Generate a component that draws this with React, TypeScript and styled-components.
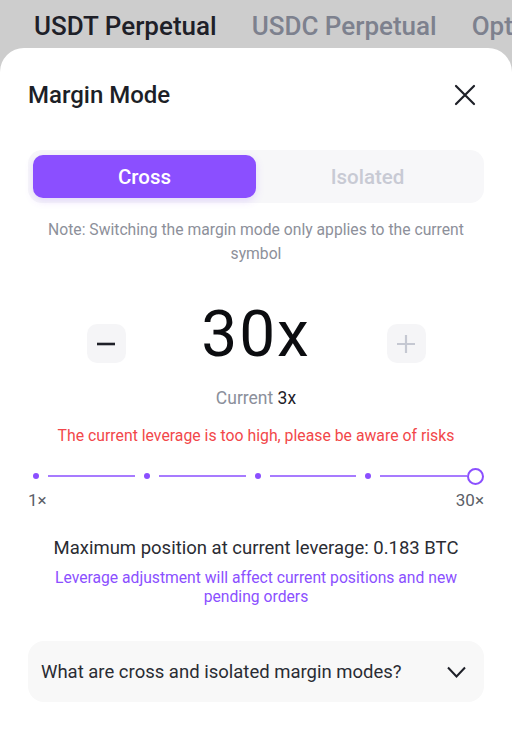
import { Fragment } from 'react'
import styled, { createGlobalStyle } from 'styled-components'

const GlobalStyle = createGlobalStyle`
  html, body {
    margin: 0;
    padding: 0;
    background: #cdcdcd;
    font-family: Roboto, 'Liberation Sans', Arial, sans-serif;
    -webkit-font-smoothing: antialiased;
  }
  * {
    box-sizing: border-box;
  }
`

const Page = styled.div`
  width: 512px;
  height: 729px;
  overflow: hidden;
  display: flex;
  flex-direction: column;
`

const TabBar = styled.div`
  height: 48px;
  flex-shrink: 0;
  display: flex;
  align-items: center;
  gap: 35px;
  padding: 3px 0 0 34px;
  white-space: nowrap;
  overflow: hidden;
`

const Tab = styled.span<{ $active?: boolean }>`
  font-size: 26px;
  font-weight: 500;
  color: ${({ $active }) => ($active ? '#1e2028' : '#7d818e')};
`

const Sheet = styled.div`
  flex: 1;
  background: #fff;
  border-radius: 24px 24px 0 0;
  padding: 31px 28px 0;
  display: flex;
  flex-direction: column;
`

const Header = styled.div`
  display: flex;
  align-items: center;
  justify-content: space-between;
  height: 32px;
`

const Title = styled.h1`
  margin: 0;
  font-size: 24px;
  font-weight: 500;
  color: #1d1f27;
`

const CloseButton = styled.button`
  width: 22px;
  height: 22px;
  padding: 0;
  margin-right: 8px;
  border: none;
  background: none;
  display: flex;
`

const Segmented = styled.div`
  margin-top: 39px;
  height: 53px;
  padding: 5px;
  border-radius: 14px;
  background: #f7f7f9;
  display: grid;
  grid-template-columns: 1fr 1fr;
`

const Segment = styled.div<{ $active?: boolean }>`
  display: flex;
  align-items: center;
  justify-content: center;
  border-radius: 10px;
  font-size: 20.5px;
  font-weight: 500;
  color: ${({ $active }) => ($active ? '#fff' : '#c8cad4')};
  background: ${({ $active }) => ($active ? '#8b4fff' : 'transparent')};
  box-shadow: ${({ $active }) => ($active ? '0 3px 8px rgba(139, 79, 255, 0.18)' : 'none')};
`

const Note = styled.p`
  margin: 15px 4px 0;
  font-size: 15.7px;
  line-height: 24px;
  color: #8d909a;
  text-align: center;
`

const LeverageRow = styled.div`
  margin-top: 33px;
  display: flex;
  justify-content: center;
  align-items: flex-start;
`

const StepButton = styled.button<{ $disabled?: boolean }>`
  width: 39px;
  height: 39px;
  margin-top: 25px;
  padding: 0;
  border: none;
  border-radius: 10px;
  background: #f5f5f7;
  display: flex;
  align-items: center;
  justify-content: center;
  color: ${({ $disabled }) => ($disabled ? '#c5c8d2' : '#1e2028')};
`

const Value = styled.div`
  width: 261px;
  text-align: center;
  font-size: 64px;
  line-height: 72px;
  font-weight: 400;
  color: #0c0d10;
  letter-spacing: 2px;
`

const Current = styled.div`
  margin-top: 15px;
  text-align: center;
  font-size: 17.5px;
  line-height: 24px;
  color: #8b8f9b;
`

const CurrentValue = styled.span`
  color: #1e2028;
`

const Warning = styled.div`
  margin-top: 15px;
  text-align: center;
  font-size: 15.8px;
  line-height: 22px;
  color: #f2474a;
`

const Slider = styled.div`
  margin-top: 20px;
  height: 18px;
  padding: 0 0 0 5px;
  display: flex;
  align-items: center;
`

const Dot = styled.span`
  width: 6px;
  height: 6px;
  border-radius: 50%;
  background: #8b4fff;
  flex-shrink: 0;
`

const Track = styled.span<{ $last?: boolean }>`
  flex: 1;
  height: 2px;
  background: #a77bff;
  margin: ${({ $last }) => ($last ? '0 0 0 9px' : '0 9px')};
`

const Thumb = styled.span`
  width: 17px;
  height: 17px;
  border-radius: 50%;
  border: 2.5px solid #8b4fff;
  background: #fff;
  flex-shrink: 0;
`

const Scale = styled.div`
  margin-top: 5px;
  display: flex;
  justify-content: space-between;
  font-size: 17px;
  line-height: 20px;
  color: #5c5f68;
`

const MaxPosition = styled.div`
  margin-top: 26px;
  text-align: center;
  font-size: 18.5px;
  line-height: 24px;
  color: #2a2c33;
`

const Hint = styled.div`
  margin: 8px 20px 0;
  text-align: center;
  font-size: 15.7px;
  line-height: 19px;
  color: #8b50ff;
`

const Faq = styled.div`
  margin-top: 35px;
  height: 61px;
  border-radius: 16px;
  background: #f8f8f8;
  padding: 0 18px 0 13px;
  display: flex;
  align-items: center;
  justify-content: space-between;
  font-size: 18.5px;
  color: #2a2c33;
`

export default function App() {
  const stops = [0, 1, 2, 3]
  return (
    <Page>
      <GlobalStyle />
      <TabBar>
        <Tab $active>USDT Perpetual</Tab>
        <Tab>USDC Perpetual</Tab>
        <Tab>Options</Tab>
      </TabBar>
      <Sheet>
        <Header>
          <Title>Margin Mode</Title>
          <CloseButton>
            <svg width="22" height="22" viewBox="0 0 22 22">
              <path d="M2 2L20 20M20 2L2 20" stroke="#1e2028" strokeWidth="2.2" strokeLinecap="round" />
            </svg>
          </CloseButton>
        </Header>
        <Segmented>
          <Segment $active>Cross</Segment>
          <Segment>Isolated</Segment>
        </Segmented>
        <Note>Note: Switching the margin mode only applies to the current symbol</Note>
        <LeverageRow>
          <StepButton>
            <svg width="20" height="20" viewBox="0 0 20 20">
              <path d="M1 10H19" stroke="currentColor" strokeWidth="2.6" />
            </svg>
          </StepButton>
          <Value>30x</Value>
          <StepButton $disabled>
            <svg width="20" height="20" viewBox="0 0 20 20">
              <path d="M1 10H19M10 1V19" stroke="currentColor" strokeWidth="2.2" />
            </svg>
          </StepButton>
        </LeverageRow>
        <Current>
          Current <CurrentValue>3x</CurrentValue>
        </Current>
        <Warning>The current leverage is too high, please be aware of risks</Warning>
        <Slider>
          {stops.map((i) => (
            <Fragment key={i}>
              <Dot />
              <Track $last={i === 3} />
            </Fragment>
          ))}
          <Thumb />
        </Slider>
        <Scale>
          <span>1×</span>
          <span>30×</span>
        </Scale>
        <MaxPosition>Maximum position at current leverage: 0.183 BTC</MaxPosition>
        <Hint>Leverage adjustment will affect current positions and new pending orders</Hint>
        <Faq>
          <span>What are cross and isolated margin modes?</span>
          <svg width="19" height="12" viewBox="0 0 19 12">
            <path d="M1 1.5L9.5 10.5L18 1.5" fill="none" stroke="#1e2028" strokeWidth="2" />
          </svg>
        </Faq>
      </Sheet>
    </Page>
  )
}
